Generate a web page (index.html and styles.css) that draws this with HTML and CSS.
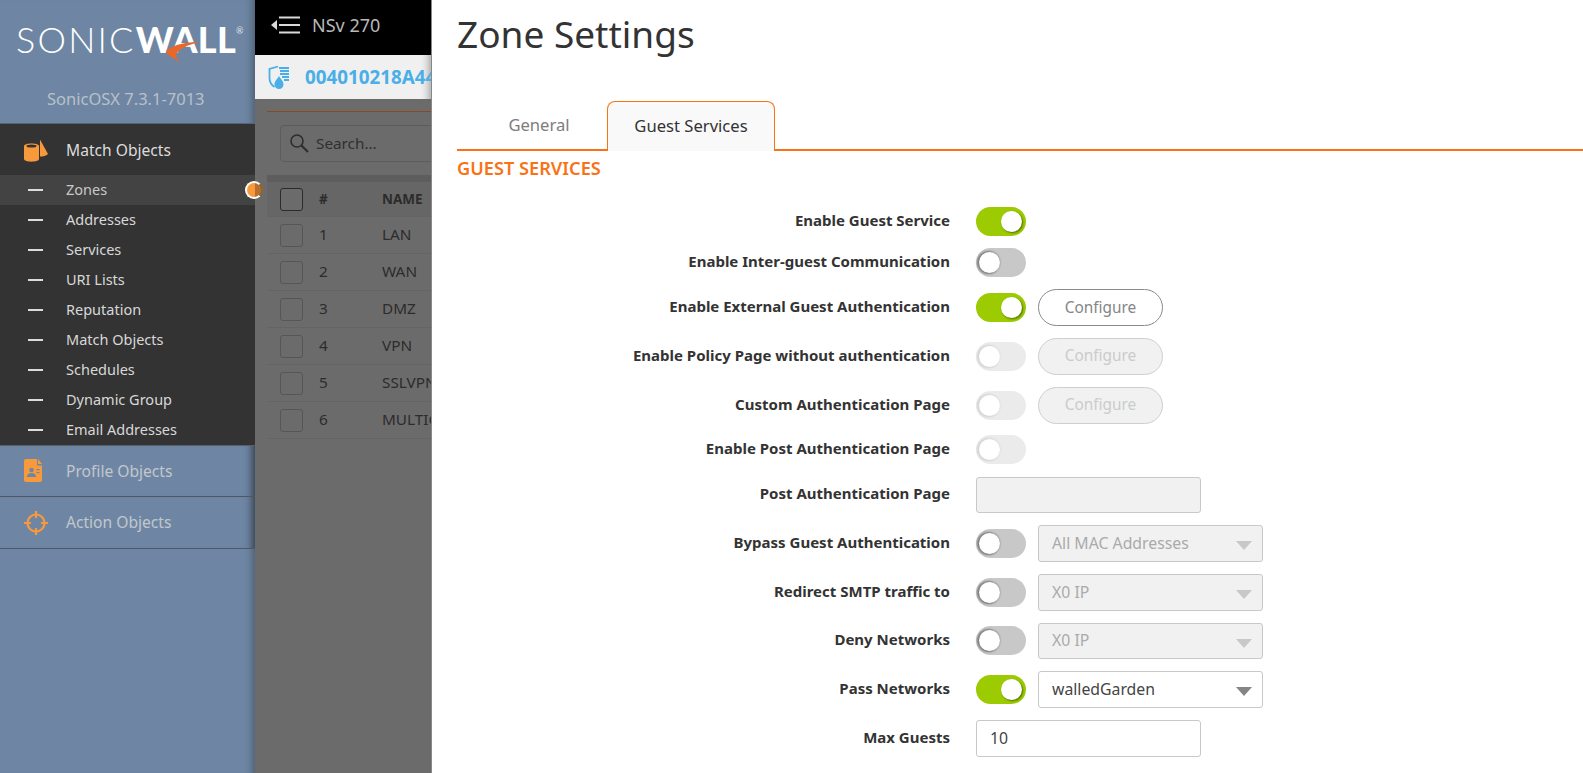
FILE: index.html
```html
<!DOCTYPE html>
<html lang="en">
<head>
<meta charset="utf-8">
<title>Zone Settings</title>
<link rel="stylesheet" href="styles.css">
</head>
<body>
<div class="app">
  <aside class="sidebar">
    <div class="brand">
      <div class="logo"><span class="logo-thin">SONIC</span><span class="logo-bold">WALL</span><span class="logo-reg">®</span>
        <svg class="swoosh" width="36" height="24" viewBox="0 0 36 24"><path fill="#e8672a" d="M34 1C22 1 9 3 1 10c1 3 3 5 7 7 4 2 7 4 9 6-3-3-6-6-6-9C13 8 23 4 34 1z"/></svg>
      </div>
      <div class="version">SonicOSX 7.3.1-7013</div>
    </div>
    <div class="group-open">
      <div class="group-title">
        <svg class="group-icon" width="24" height="24" viewBox="0 0 24 24"><path fill="#f89a3c" d="M16 1.500 24 16c-2 2-5 2.500-8 2.500z"/><path fill="#f89a3c" d="M0 8c0-3.500 15-3.500 15 0v13c0 3.500-15 3.500-15 0z"/><ellipse cx="7.500" cy="8" rx="5" ry="1.500" fill="#333"/></svg>
        <span>Match Objects</span>
      </div>
      <ul class="sub">
        <li class="sub-item active">Zones</li>
        <li class="sub-item">Addresses</li>
        <li class="sub-item">Services</li>
        <li class="sub-item">URI Lists</li>
        <li class="sub-item">Reputation</li>
        <li class="sub-item">Match Objects</li>
        <li class="sub-item">Schedules</li>
        <li class="sub-item">Dynamic Group</li>
        <li class="sub-item">Email Addresses</li>
      </ul>
    </div>
    <div class="group-closed">
      <svg class="group-icon" width="24" height="24" viewBox="0 0 24 24"><path fill="#f89a3c" d="M2 0h11v6.500h5V21a2 2 0 0 1-2 2H2a2 2 0 0 1-2-2V2a2 2 0 0 1 2-2zM14 0l4 5h-4z"/><circle cx="7.500" cy="11" r="2.300" fill="#6e86a3"/><path fill="#6e86a3" d="M3 18c0-3 2-4 4.500-4s4.500 1 4.500 4zM12.500 10h3v1.300h-3zM12.500 13h3v1.300h-3z"/></svg>
      <span>Profile Objects</span>
    </div>
    <div class="group-closed">
      <svg class="group-icon" width="24" height="24" viewBox="0 0 24 24"><circle cx="12" cy="12" r="8.500" fill="none" stroke="#f89a3c" stroke-width="2.200"/><path stroke="#f89a3c" stroke-width="2.200" d="M12 0v7M12 17v7M0 12h7M17 12h7"/></svg>
      <span>Action Objects</span>
    </div>
    <span class="handle"></span>
  </aside>

  <section class="backdrop">
    <header class="topbar">
      <svg class="top-icon" width="30" height="20" viewBox="0 0 30 20"><path fill="#d9d9d9" d="M0 10l6-5v10z"/><path stroke="#d9d9d9" stroke-width="1.800" d="M8 2.500h21M8 10h21M8 17.500h21"/></svg>
      <span>NSv 270</span>
    </header>
    <div class="device">
      <svg class="top-icon" width="22" height="25" viewBox="0 0 22 25"><path fill="none" stroke="#4aaee8" stroke-width="1.800" d="M10 1.500 1.500 4v9c0 4 2 7 5 9"/><path fill="#4aaee8" d="M11 2h10v2H11zM12 5h9v2h-9zM12 8h9v2h-9zM14 11h7v2h-7zM16 14h5v2h-5z"/><path fill="#4aaee8" d="M11 11c1.500 3 4.500 5 4.500 8.500a4.500 4.500 0 0 1-9 0c0-3.500 3-5.500 4.500-8.500z"/></svg>
      <span>004010218A44</span>
    </div>
    <div class="rule"></div>
    <div class="search">
      <svg class="top-icon" width="20" height="20" viewBox="0 0 20 20"><circle cx="8" cy="8" r="6" fill="none" stroke="#2e2e2e" stroke-width="1.600"/><path stroke="#2e2e2e" stroke-width="2.200" d="M12.500 12.500 19 19"/></svg>
      <span>Search...</span>
    </div>
    <div class="table">
      <div class="thead-strip"></div>
      <div class="row head"><span class="check"></span><span class="num">#</span><span class="name">NAME</span></div>
      <div class="row"><span class="check"></span><span class="num">1</span><span class="name">LAN</span></div>
      <div class="row"><span class="check"></span><span class="num">2</span><span class="name">WAN</span></div>
      <div class="row"><span class="check"></span><span class="num">3</span><span class="name">DMZ</span></div>
      <div class="row"><span class="check"></span><span class="num">4</span><span class="name">VPN</span></div>
      <div class="row"><span class="check"></span><span class="num">5</span><span class="name">SSLVPN</span></div>
      <div class="row"><span class="check"></span><span class="num">6</span><span class="name">MULTICAST</span></div>
    </div>
  </section>

  <main class="drawer">
    <h1 class="title">Zone Settings</h1>
    <nav class="tabs">
      <span class="tab">General</span>
      <span class="tab tab-active">Guest Services</span>
    </nav>
    <h2 class="section">GUEST SERVICES</h2>
    <form class="form">
      <div class="line"><label class="label">Enable Guest Service</label><span class="toggle on"></span></div>
      <div class="line"><label class="label">Enable Inter-guest Communication</label><span class="toggle off"></span></div>
      <div class="line tall"><label class="label">Enable External Guest Authentication</label><span class="toggle on"></span><span class="btn">Configure</span></div>
      <div class="line tall"><label class="label">Enable Policy Page without authentication</label><span class="toggle dis"></span><span class="btn btn-dis">Configure</span></div>
      <div class="line tall"><label class="label">Custom Authentication Page</label><span class="toggle dis"></span><span class="btn btn-dis">Configure</span></div>
      <div class="line"><label class="label">Enable Post Authentication Page</label><span class="toggle dis"></span></div>
      <div class="line tall"><label class="label">Post Authentication Page</label><span class="input input-dis"></span></div>
      <div class="line tall"><label class="label">Bypass Guest Authentication</label><span class="toggle off"></span><span class="select select-dis">All MAC Addresses</span></div>
      <div class="line tall"><label class="label">Redirect SMTP traffic to</label><span class="toggle off"></span><span class="select select-dis">X0 IP</span></div>
      <div class="line tall"><label class="label">Deny Networks</label><span class="toggle off"></span><span class="select select-dis">X0 IP</span></div>
      <div class="line tall"><label class="label">Pass Networks</label><span class="toggle on"></span><span class="select">walledGarden</span></div>
      <div class="line tall"><label class="label">Max Guests</label><span class="input">10</span></div>
    </form>
  </main>
</div>
</body>
</html>
```
FILE: styles.css
```css
* { box-sizing: border-box; }
html, body { margin: 0; height: 100%; overflow: hidden; }
body { font-family: "Noto Sans", "Lato", sans-serif; color: #333; background: #fff; }
.app { display: flex; height: 773px; width: 1583px; overflow: hidden; }

/* Sidebar */
.sidebar { position: relative; flex: 0 0 255px; background: #6e86a3; box-shadow: inset -10px 0 8px -8px rgba(0,0,0,.35); z-index: 2; }
.brand { height: 124px; padding: 19px 0 0 16px; border-bottom: 1px solid #566375; font-family: "Lato", sans-serif; }
.logo { position: relative; display: flex; align-items: flex-start; height: 40px; line-height: 40px; font-size: 36px; color: #fff; white-space: nowrap; }
.logo-thin { font-weight: 300; letter-spacing: 2.200px; }
.logo-bold { font-weight: 900; letter-spacing: .3px; }
.logo-reg { font-size: 9px; line-height: 24px; margin-left: 0; color: #dfe3e8; }
.swoosh { position: absolute; left: 149px; top: 22px; }
.version { margin: 30px 0 0 31px; font-family: "Noto Sans", sans-serif; font-size: 16.500px; line-height: 20px; color: #b9c0c9; }
.group-open { background: #333; }
.group-title { display: flex; align-items: center; height: 51px; padding-left: 24px; font-size: 15.600px; color: #dcdcdc; }
.group-icon { margin-right: 18px; flex: none; }
.sub { list-style: none; margin: 0; padding: 0; height: 270px; }
.sub-item { position: relative; height: 30px; line-height: 29px; padding-left: 66px; font-size: 14.500px; color: #d8d8d8; }
.sub-item::before { content: ""; position: absolute; left: 28px; top: 14px; width: 15px; height: 2px; background: #dcdcdc; }
.sub-item.active { background: #434343; color: #c8c8c8; }
.group-closed { display: flex; align-items: center; height: 52px; padding-left: 24px; font-size: 15.600px; color: #c2c7cd; border-bottom: 1px solid #4d5866; box-shadow: inset -10px 0 8px -8px rgba(0,0,0,.35); }
.group-closed span { margin-bottom: 1px; }
.group-open + .group-closed { border-top: 1px solid #56606c; }
.handle { position: absolute; left: 245px; top: 181px; width: 18px; height: 18px; border-radius: 50%; border: 2px solid #fff; border-right-color: #9a6228; background: linear-gradient(90deg, #f89a3c 55%, #b2712e 55%); }

/* Dimmed page behind drawer */
.top-icon { flex: none; }
.backdrop { flex: 0 0 177px; background: #6b6b6b; overflow: hidden; }
.topbar { display: flex; align-items: center; height: 55px; padding: 0 0 5px 16px; gap: 11px; background: #000; color: #b9b9b9; font-size: 18px; }
.device { display: flex; align-items: center; gap: 15px; height: 44px; padding-left: 13px; background: #f0f0f0; color: #4aaee8; font-size: 18.800px; font-weight: 700; white-space: nowrap; box-shadow: inset -12px 0 10px -10px rgba(0,0,0,.4); }
.rule { height: 1px; margin: 12px 0 0 12px; background: #8a4a1f; }
.search { display: flex; align-items: center; gap: 7px; width: 230px; height: 37px; margin: 13px 0 0 25px; padding: 0 0 2px 8px; border: 1px solid #5c5c5c; border-radius: 4px; font-size: 15.300px; color: #303030; }
.table { margin: 13px 0 0 12px; width: 320px; }
.thead-strip { height: 7px; background: #5d5d5d; }
.row { display: flex; align-items: center; height: 37px; padding: 0 0 0 13px; border-bottom: 1px solid #646464; font-size: 15.300px; color: #2c2c2c; white-space: nowrap; }
.row.head { height: 35px; background: #666; font-size: 13.500px; font-weight: 700; }
.check { flex: none; width: 23px; height: 23px; border: 1px solid #565656; border-radius: 3px; background: #6b6b6b; }
.head .check { border-color: #2b2b2b; }
.num { width: 79px; padding: 0 0 2px 16px; }
.name { flex: none; padding-bottom: 2px; }
.head .num, .head .name { padding-bottom: 0; }

/* Drawer */
.drawer { flex: 1; padding: 0 0 0 25px; background: #fff; z-index: 3; box-shadow: -1px 0 0 #888; }
.title { margin: 0; padding-top: 12px; height: 101px; font-size: 37px; line-height: 44px; font-weight: 400; color: #333; }
.tabs { display: flex; height: 50px; padding-left: 26px; border-bottom: 2px solid #f97316; position: relative; }
.tabs .tab { display: flex; align-items: center; justify-content: center; height: 50px; width: 124px; padding: 0 12px 3px 0; font-size: 16.600px; color: #7d7d7d; }
.tabs .tab-active { width: 168px; padding: 0 0 3px; background: #f9f9f9; border: 1px solid #f97316; border-bottom: 0; border-radius: 8px 8px 0 0; color: #333; }
.section { margin: 5px 0 0; height: 30px; font-size: 18.200px; line-height: 24px; font-weight: 600; color: #f97316; }
.form { display: flex; flex-direction: column; gap: 12.200px; padding-top: 21px; }
.line { display: flex; align-items: center; gap: 12px; height: 29px; }
.line.tall { height: 36.500px; }
.label { flex: none; width: 493px; margin-right: 14px; padding-bottom: 3px; text-align: right; font-size: 15px; font-weight: 700; color: #333; }
.toggle { position: relative; flex: none; width: 50px; height: 29px; border-radius: 15px; }
.toggle::after { content: ""; position: absolute; top: 4px; width: 21px; height: 21px; border-radius: 50%; background: #fff; }
.toggle.on { background: #9bcb00; }
.toggle.on::after { right: 4px; box-shadow: 1px 1px 2px rgba(60,80,0,.8); }
.toggle.off { background: #c8c8c8; }
.toggle.off::after { left: 3px; box-shadow: -1px 0 2px 1px #7d7d7d; }
.toggle.dis { background: #ebebeb; }
.toggle.dis::after { left: 3px; box-shadow: -1px 0 2px 1px #d3d3d3; }
.btn { display: flex; align-items: center; justify-content: center; flex: none; width: 125px; height: 37px; padding-bottom: 1px; border: 1px solid #8a8a8a; border-radius: 19px; font-size: 15.400px; color: #858585; }
.btn-dis { background: #f1f1f1; border-color: #cfcfcf; color: #cbcbcb; }
.input { display: flex; align-items: center; flex: none; width: 225px; height: 36.500px; padding: 0 0 1px 13px; border: 1px solid #c8c8c8; border-radius: 3px; font-size: 15.800px; color: #444; }
.input-dis { background: #f1f1f1; }
.select { position: relative; display: flex; align-items: center; flex: none; width: 225px; height: 36.500px; padding: 0 0 1px 13px; border: 1px solid #c8c8c8; border-radius: 3px; font-size: 15.800px; color: #444; }
.select::after { content: ""; position: absolute; right: 10px; top: 15px; border-style: solid; border-width: 9px 8.500px 0; border-color: #858585 transparent transparent; }
.select-dis { background: #f1f1f1; color: #aaa; }
.select-dis::after { border-top-color: #c8c8c8; }
```
